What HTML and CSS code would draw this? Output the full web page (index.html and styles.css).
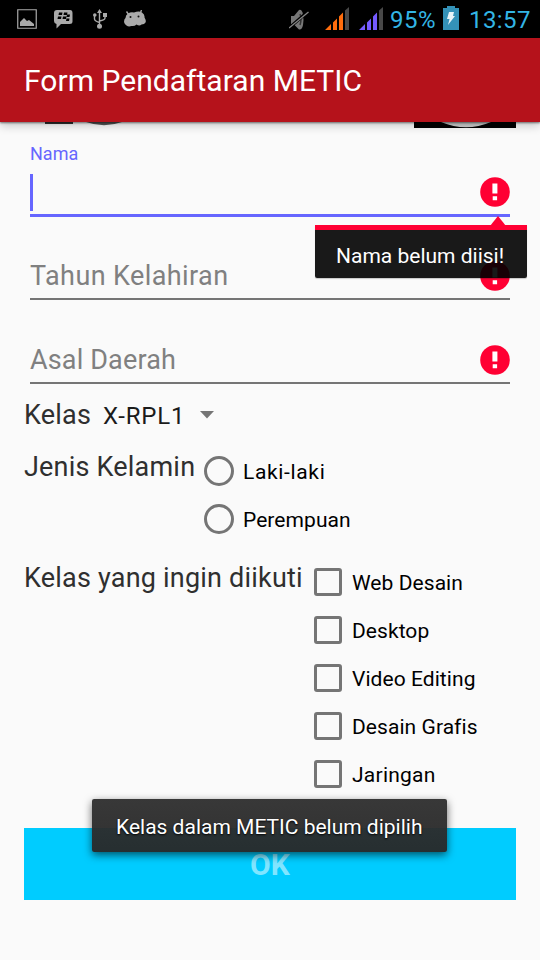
FILE: index.html
```html
<!DOCTYPE html>
<html lang="id">
<head>
<meta charset="utf-8">
<title>Form Pendaftaran METIC</title>
<link rel="stylesheet" href="styles.css">
</head>
<body>
<div class="screen">
  <header class="status">
    <div class="status-left">
      <svg width="20" height="20" viewBox="0 0 20 20"><path d="M.75.75h18.5v18.5H.75z" fill="none" stroke="#aaa" stroke-width="1.2"/><path d="M3 17v-4l4-4 3 3 2-1 5 4v2z" fill="#aaa"/></svg>
      <svg width="19" height="20" viewBox="0 0 19 20"><path d="M3 1h13q2.500 0 2.500 3v8.500q0 2.500-3 2.500H7l-4.500 4.500V15Q0 14.500 0 12V4q0-3 3-3z" fill="#aaa"/><path d="M5 3.500h3.500l-.5 2.500H4.500zM10 3.500h3.500l-.5 2.500H9.500zM4 7.500h3.500L7 10H3.500zM9 7.500h3.500L12 10H8.500zM13 5.500h3l-.5 2.500h-3zM12.500 9.500h3l-.5 2.500h-3z" fill="#000"/></svg>
      <svg width="14" height="20" viewBox="0 0 14 20"><path d="M6.500 2v15M1.500 6v4q0 2 5 3.500M12 6v3q0 2-5.500 3" fill="none" stroke="#aaa" stroke-width="1.400"/><path d="M6.500 0L9 4H4zM10 4h4v4h-4z" fill="#aaa"/><circle cx="1.800" cy="6" r="1.800" fill="#aaa"/><circle cx="6.500" cy="17.200" r="2.500" fill="#aaa"/></svg>
      <svg width="22" height="17" viewBox="0 0 22 17"><path d="M2.500 1.500L5 5M17.500 0L16 4" stroke="#aaa" stroke-width="1.400"/><path d="M4 3.500q3-2 6-1 5-2 8 0 3 2 2.500 5 2 3 1 5t-4 2q-2 2-5 0-2 2-5 1.500-3 1-5-.5T0 12q0-3 1.500-4Q1.500 5 4 3.500z" fill="#aaa"/><circle cx="6.500" cy="7" r="1" fill="#111"/><circle cx="14.500" cy="6.500" r="1" fill="#111"/></svg>
    </div>
    <div class="status-right">
      <svg class="mute" width="20" height="21" viewBox="0 0 20 21"><path d="M2 7h3l5-6q3-1 4 4.500t0 10.500-4 4.500l-5-5H2z" fill="#777"/><path d="M11 5q2 5 0 11" fill="none" stroke="#333" stroke-width="1.500"/><path d="M.5 18.500L19 2.500" stroke="#000" stroke-width="3"/><path d="M0 19L19.500 3" stroke="#888" stroke-width="1.300"/></svg>
      <svg class="sig1" width="24" height="23" viewBox="0 0 24 23"><path d="M0 23l6-6v6zM8 15.500l4-4V23H8zM14 9.500l4-4V23h-4z" fill="#ff6d0d"/><path d="M20 3.500l4-3.500v23h-4z" fill="#484848"/></svg>
      <svg class="sig2" width="24" height="23" viewBox="0 0 24 23"><path d="M0 23l6-6v6zM8 15.500l4-4V23H8zM14 9.500l4-4V23h-4z" fill="#755bff"/><path d="M20 3.500l4-3.500v23h-4z" fill="#484848"/></svg>
      <span class="percent">95%</span>
      <svg class="battery" width="16" height="24" viewBox="0 0 16 24"><path d="M0 2h4V0h8v2h4v22H0z" fill="#3492b8"/><path d="M6 6h5l-1 4h2L5 19l1.500-6H4z" fill="#e8f4f8"/></svg>
      <span class="clock">13:57</span>
    </div>
  </header>
  <div class="toolbar"><h1>Form Pendaftaran METIC</h1></div>
  <main class="form">
    <div class="banner">
      <svg class="banner-left" width="90" height="6" viewBox="0 0 90 6"><path d="M0 0h28v2H0z" fill="#333"/><path d="M41 0h36Q59 6.500 41 0z" fill="#555"/></svg>
      <svg width="102" height="6" viewBox="0 0 102 6"><path d="M0 0h102v6H0z"/><path d="M27 0h50Q52 10.500 27 0z" fill="#ccc"/></svg>
    </div>
    <div class="field focused">
      <label>Nama</label>
      <div class="input"><i class="caret"></i><svg class="error" width="30" height="30" viewBox="0 0 30 30"><circle cx="15" cy="15" r="14.800" fill="#ff0033"/><path d="M12.400 6.500h5v10h-5zM12.700 19.200h4.400v4h-4.400z" fill="#fff"/></svg></div>
      <div class="popup"><svg class="pointer" width="16" height="10" viewBox="0 0 16 10"><path d="M0 10L8 0l8 10z" fill="#ff0033"/></svg><span>Nama belum diisi!</span></div>
    </div>
    <div class="field second">
      <div class="input"><span class="tahun">Tahun Kelahiran</span><svg class="error" width="30" height="30" viewBox="0 0 30 30"><circle cx="15" cy="15" r="14.800" fill="#ff0033"/><path d="M12.400 6.500h5v10h-5zM12.700 19.200h4.400v4h-4.400z" fill="#fff"/></svg></div>
    </div>
    <div class="field">
      <div class="input"><span class="asal">Asal Daerah</span><svg class="error" width="30" height="30" viewBox="0 0 30 30"><circle cx="15" cy="15" r="14.800" fill="#ff0033"/><path d="M12.400 6.500h5v10h-5zM12.700 19.200h4.400v4h-4.400z" fill="#fff"/></svg></div>
    </div>
    <div class="row spinner"><span class="title kelas">Kelas</span><span class="value">X-RPL1</span><svg width="14" height="8" viewBox="0 0 14 8"><path d="M0 0h14L7 7.500z" fill="#757575"/></svg></div>
    <div class="row gender">
      <span class="title jenis">Jenis Kelamin</span>
      <div class="options">
        <div class="option"><i class="radio"></i><span class="laki">Laki-laki</span></div>
        <div class="option"><i class="radio"></i><span>Perempuan</span></div>
      </div>
    </div>
    <div class="row classes">
      <span class="title diikuti">Kelas yang ingin diikuti</span>
      <div class="options">
        <div class="option"><i class="check"></i><span>Web Desain</span></div>
        <div class="option"><i class="check"></i><span>Desktop</span></div>
        <div class="option"><i class="check"></i><span>Video Editing</span></div>
        <div class="option"><i class="check"></i><span>Desain Grafis</span></div>
        <div class="option"><i class="check"></i><span class="jaringan">Jaringan</span></div>
      </div>
    </div>
    <div class="submit">OK</div>
  </main>
  <div class="toast"><span>Kelas dalam METIC belum dipilih</span></div>
</div>
</body>
</html>
```
FILE: styles.css
```css
* { box-sizing: border-box; }
body { margin: 0; font-family: Roboto, sans-serif; background: #fafafa; }
svg { display: block; flex: none; }
span, label, h1 { white-space: nowrap; }
.screen { position: relative; width: 540px; height: 960px; overflow: hidden; background: #fafafa; }

.status { display: flex; justify-content: space-between; height: 38px; background: #000; }
.status-left { display: flex; align-items: flex-start; gap: 17px; padding: 9px 0 0 17px; }
.status-left svg:nth-child(3) { margin-left: 3px; }
.status-left svg:nth-child(4) { margin: 1px 0 0 0; }
.status-right { display: flex; width: 251px; color: #33b5e5; font-size: 24px; line-height: 40px; }
.mute { margin-top: 9px; }
.sig1 { margin: 7px 0 0 16px; }
.sig2 { margin: 7px 0 0 10px; }
.percent { width: 44px; margin-left: 7px; letter-spacing: .5px; }
.battery { margin: 6px 0 0 9px; }
.clock { margin-left: 10px; letter-spacing: .4px; }

.toolbar { position: relative; z-index: 1; height: 84px; padding-left: 24px; background: #b5121b; box-shadow: 0 1px 2px rgba(0,0,0,.5), 0 4px 9px rgba(0,0,0,.2); }
.toolbar h1 { margin: 0; color: #fff; font-size: 30px; font-weight: 400; line-height: 85px; letter-spacing: .03px; }

.form { padding: 0 24px; }
.banner { display: flex; justify-content: space-between; height: 6px; }
.banner-left { margin-left: 21px; }

.field { position: relative; height: 84px; padding: 38px 6px 0; }
.field.second { height: 83px; padding-top: 37px; }
.input { display: flex; align-items: center; height: 46px; border-bottom: 2px solid #757575; color: #808080; font-size: 27px; line-height: 44px; }
.tahun { letter-spacing: .4px; }
.asal { letter-spacing: .15px; }
.error { margin-left: auto; }
.focused { height: 89px; padding-top: 17px; }
.focused label { display: block; color: #6666ff; font-size: 18px; line-height: 18px; }
.focused .input { height: 54px; padding-top: 7px; border-bottom: 3px solid #6666ff; }
.focused .error { margin-top: -1px; }
.caret { width: 3px; height: 37px; margin-top: 1px; background: #6666ff; }
.popup { position: absolute; z-index: 2; top: 97px; left: 291px; width: 212px; height: 53px; padding-left: 21px; border-top: 5px solid #ff0033; border-radius: 0 0 2px 2px; background: rgba(0,0,0,.9); background-clip: padding-box; box-shadow: 0 1px 1px rgba(0,0,0,.2); color: #fff; font-size: 21px; line-height: 52px; }
.pointer { position: absolute; top: -14px; left: 175px; }

.row { display: flex; }
.title { flex: none; color: #2f2f2f; font-size: 27px; letter-spacing: .2px; }
.spinner { align-items: center; height: 62px; }
.kelas { width: 79px; }
.value { width: 97px; padding-top: 1px; color: #1b1b1b; font-size: 24px; letter-spacing: .8px; }
.gender { height: 111px; padding-top: 1px; }
.gender .title { width: 180px; line-height: 40px; }
.options { display: flex; flex-direction: column; }
.option { display: flex; align-items: center; height: 48px; color: #000; font-size: 21px; letter-spacing: .06px; }
.option span { padding-top: 2px; }
.laki { letter-spacing: .65px; }
.jaringan { letter-spacing: .25px; }
.radio { width: 30px; height: 30px; margin-right: 9px; border: 3px solid #757575; border-radius: 50%; }
.classes { height: 271px; padding-top: 1px; }
.classes .title { width: 290px; line-height: 40px; }
.check { width: 28px; height: 28px; margin-right: 10px; border: 3px solid #757575; border-radius: 3px; }
.submit { height: 72px; background: #00ccff; color: #80e5ff; font-size: 30px; font-weight: 700; line-height: 74px; text-align: center; }

.toast { position: absolute; z-index: 3; top: 799px; left: 92px; width: 355px; height: 53px; padding-left: 24px; border-radius: 2px; background: linear-gradient(rgba(48,48,48,.96), rgba(40,40,40,.96)); box-shadow: 0 3px 9px rgba(0,0,0,.6); color: #fff; font-size: 21px; line-height: 56px; text-shadow: 0 1px 2px #000; }
```
